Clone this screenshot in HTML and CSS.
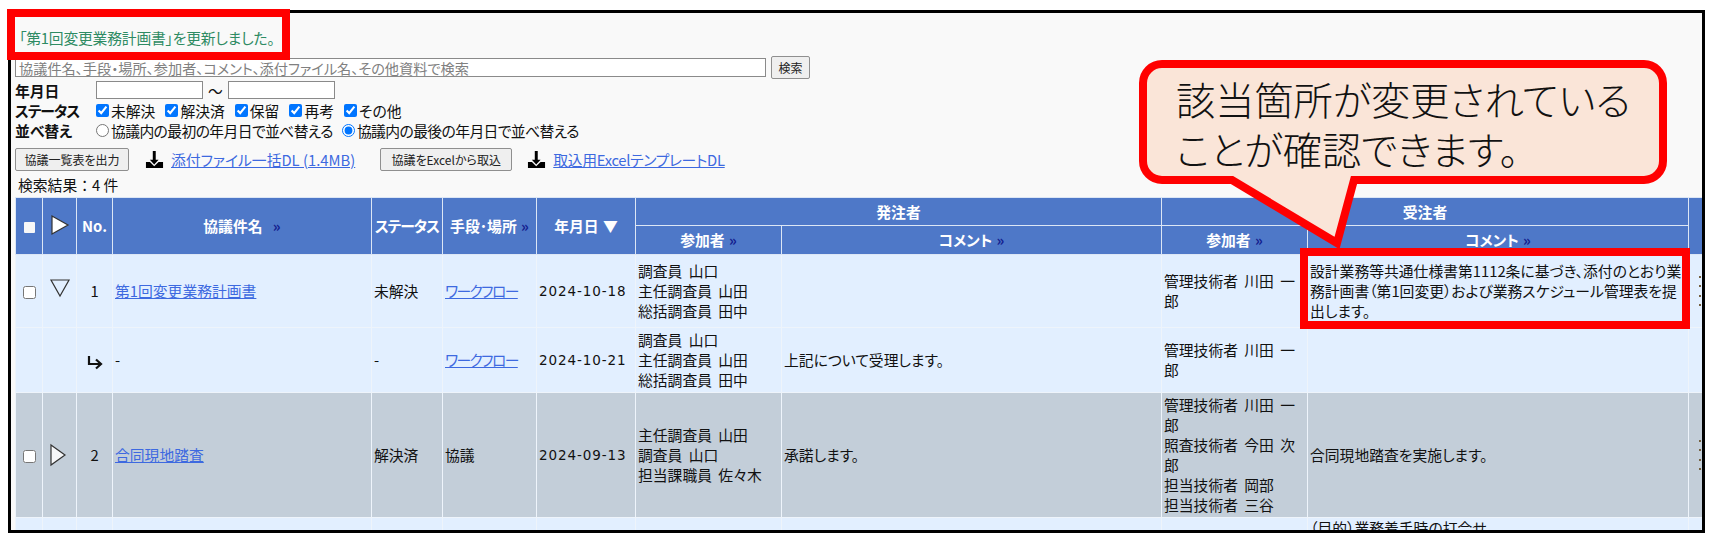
FILE: index.html
```html
<!DOCTYPE html>
<html lang="ja">
<head>
<meta charset="utf-8">
<title>協議一覧</title>
<link rel="stylesheet" href="styles.css">
</head>
<body>
<main class="frame">
  <p class="notice">「第1回変更業務計画書」を更新しました。</p>
  <form class="search-row">
    <input class="search-input" type="text" placeholder="協議件名、手段・場所、参加者、コメント、添付ファイル名、その他資料で検索">
    <button class="btn btn-search" type="button">検索</button>
  </form>
  <div class="filter-row">
    <span class="filter-label">年月日</span>
    <input class="date-input" type="text">
    <span class="tilde">～</span>
    <input class="date-input" type="text">
  </div>
  <div class="filter-row">
    <span class="filter-label label-narrow">ステータス</span>
    <label class="opt"><input type="checkbox" checked>未解決</label>
    <label class="opt"><input type="checkbox" checked>解決済</label>
    <label class="opt"><input type="checkbox" checked>保留</label>
    <label class="opt"><input type="checkbox" checked>再考</label>
    <label class="opt"><input type="checkbox" checked>その他</label>
  </div>
  <div class="filter-row">
    <span class="filter-label">並べ替え</span>
    <label class="opt opt-sort"><input type="radio" name="sort">協議内の最初の年月日で並べ替える</label>
    <label class="opt opt-sort"><input type="radio" name="sort" checked>協議内の最後の年月日で並べ替える</label>
  </div>
  <div class="action-row">
    <button class="btn btn-out" type="button">協議一覧表を出力</button>
    <svg class="dl-icon" viewBox="0 0 20 20"><path d="M8.2 1h3.1v9.2h3l-4.6 5-4.6-5h3.1z"/><path d="M1 12.5h4.2l4.5 4.6 4.6-4.6H19V19H1z"/></svg>
    <a class="link dl-link" href="#">添付ファイル一括DL (1.4MB)</a>
    <button class="btn btn-imp" type="button">協議をExcelから取込</button>
    <svg class="dl-icon" viewBox="0 0 20 20"><path d="M8.2 1h3.1v9.2h3l-4.6 5-4.6-5h3.1z"/><path d="M1 12.5h4.2l4.5 4.6 4.6-4.6H19V19H1z"/></svg>
    <a class="link dl-link dl-link-tight" href="#">取込用ExcelテンプレートDL</a>
  </div>
  <p class="result-count">検索結果：4 件</p>
  <table class="grid">
    <colgroup>
      <col class="c-check"><col class="c-tree"><col class="c-no"><col class="c-name"><col class="c-status"><col class="c-means"><col class="c-date">
      <col class="c-part"><col class="c-comment"><col class="c-part"><col class="c-comment-b"><col class="c-extra">
    </colgroup>
    <thead>
      <tr class="head-top">
        <th rowspan="2"><span class="head-box"></span></th>
        <th rowspan="2"><svg class="tri-head" viewBox="0 0 20 22"><path d="M2 2l16 9-16 9z"/></svg></th>
        <th rowspan="2">No.</th>
        <th rowspan="2">協議件名 <span class="more more-wide">&raquo;</span></th>
        <th rowspan="2" class="th-narrow">ステータス</th>
        <th rowspan="2">手段･場所 <span class="more">&raquo;</span></th>
        <th rowspan="2">年月日 ▼</th>
        <th colspan="2">発注者</th>
        <th colspan="2">受注者</th>
        <th rowspan="2"></th>
      </tr>
      <tr class="head-sub">
        <th>参加者 <span class="more">&raquo;</span></th>
        <th>コメント <span class="more">&raquo;</span></th>
        <th>参加者 <span class="more">&raquo;</span></th>
        <th>コメント <span class="more">&raquo;</span></th>
      </tr>
    </thead>
    <tbody>
      <tr class="row-a">
        <td class="center"><input type="checkbox"></td>
        <td class="center"><svg class="tri" viewBox="0 0 22 20"><path d="M2 2h18l-9 16z"/></svg></td>
        <td class="center">1</td>
        <td><a class="link" href="#">第1回変更業務計画書</a></td>
        <td>未解決</td>
        <td><a class="link kana-narrow" href="#">ワークフロー</a></td>
        <td class="date">2024-10-18</td>
        <td>調査員 山口<br>主任調査員 山田<br>総括調査員 田中</td>
        <td></td>
        <td>管理技術者 川田 一郎</td>
        <td>設計業務等共通仕様書第1112条に基づき、添付のとおり業務計画書（第1回変更）および業務スケジュール管理表を提出します。</td>
        <td class="extra"><span class="clipped"></span></td>
      </tr>
      <tr class="row-b">
        <td></td>
        <td></td>
        <td class="center"><svg class="arrow" viewBox="0 0 18 16"><path d="M3 2v8h11M10 5.5l5 4.5-5 4.5"/></svg></td>
        <td>-</td>
        <td>-</td>
        <td><a class="link kana-narrow" href="#">ワークフロー</a></td>
        <td class="date">2024-10-21</td>
        <td>調査員 山口<br>主任調査員 山田<br>総括調査員 田中</td>
        <td>上記について受理します。</td>
        <td>管理技術者 川田 一郎</td>
        <td></td>
        <td class="extra"></td>
      </tr>
      <tr class="row-c">
        <td class="center"><input type="checkbox"></td>
        <td class="center"><svg class="tri-right" viewBox="0 0 18 24"><path d="M2 2l14 10-14 10z"/></svg></td>
        <td class="center">2</td>
        <td><a class="link" href="#">合同現地踏査</a></td>
        <td>解決済</td>
        <td>協議</td>
        <td class="date">2024-09-13</td>
        <td>主任調査員 山田<br>調査員 山口<br>担当課職員 佐々木</td>
        <td>承諾します。</td>
        <td>管理技術者 川田 一郎<br>照査技術者 今田 次郎<br>担当技術者 岡部<br>担当技術者 三谷</td>
        <td>合同現地踏査を実施します。</td>
        <td class="extra"><span class="clipped"></span></td>
      </tr>
      <tr class="row-d">
        <td></td><td></td><td></td><td></td><td></td><td></td><td></td><td></td><td></td><td></td>
        <td class="top">（目的）業務着手時の打合せ</td>
        <td class="extra"></td>
      </tr>
    </tbody>
  </table>
</main>

<div class="mark mark-notice"></div>
<div class="mark mark-cell"></div>
<aside class="callout">
  <svg class="callout-shape" viewBox="0 0 530 195"><path d="M23 4H505a19 19 0 0 1 19 19V101a19 19 0 0 1-19 19H215L198 183 93 120H23a19 19 0 0 1-19-19V23A19 19 0 0 1 23 4z"/></svg>
  <p class="callout-text">該当箇所が変更されている<br>ことが確認できます。</p>
</aside>
</body>
</html>
```

FILE: styles.css
```css
* { box-sizing: border-box; }
html, body { margin: 0; padding: 0; }
body {
  position: relative;
  height: 547px;
  overflow: hidden;
  background: #fff;
  color: #111;
  font-family: "Noto Sans CJK JP", "Liberation Sans", sans-serif;
  font-size: 14.8px;
  font-feature-settings: "palt";
}
.frame {
  margin: 10px 11px 0 8px;
  height: 523px;
  padding: 15px 0 0 4px;
  border: 3px solid #000;
  background: #f9f9f9;
  overflow: hidden;
}
.notice {
  margin: 0 0 8px 4px;
  height: 20px;
  line-height: 20px;
  color: #2e8b63;
  letter-spacing: -.2px;
}
.search-row { display: flex; align-items: center; gap: 5px; height: 23px; margin-bottom: 1px; }
.search-input {
  width: 751px;
  height: 19px;
  padding: 0 3px;
  border: 1px solid #8a8a8a;
  background: #fff;
  font: inherit;
  font-size: 14.2px;
}
.search-input::placeholder { color: #808080; }
.btn {
  height: 23px;
  padding: 0;
  border: 1px solid #8f8f8f;
  border-radius: 2px;
  background: #efefef;
  color: #222;
  font: inherit;
  font-size: 12px;
}
.btn-search { width: 39px; }
.btn-out { width: 114px; }
.btn-imp { width: 132px; margin-left: 25px; }
.filter-row { display: flex; align-items: center; height: 20px; }
.filter-label { flex: none; width: 81px; font-weight: 700; white-space: nowrap; }
.label-narrow { letter-spacing: -1px; }
.date-input { width: 107px; height: 18px; border: 1px solid #8a8a8a; background: #fff; }
.tilde { width: 25px; text-align: center; }
.opt { display: inline-flex; align-items: center; margin-right: 10px; }
.opt input { width: 13px; height: 13px; margin: 0 2px 0 0; }
.opt-sort { letter-spacing: -.6px; margin-right: 9px; }
.action-row { display: flex; align-items: center; height: 23px; margin-top: 8px; }
.dl-icon { flex: none; width: 19px; height: 19px; margin: 0 7px 0 16px; fill: #000; }
.btn-imp + .dl-icon { margin-left: 15px; }
.link { color: #3d69e0; text-decoration: underline; }
.kana-narrow { letter-spacing: -1.6px; }
.dl-link { white-space: nowrap; }
.dl-link-tight { letter-spacing: -.3px; }
.result-count { margin: 4px 0 2px 3px; height: 20px; line-height: 20px; font-feature-settings: normal; }
.grid {
  width: 1733px;
  table-layout: fixed;
  border-collapse: collapse;
  word-spacing: 3px;
}
.c-check { width: 27px; }
.c-tree { width: 34px; }
.c-no { width: 36px; }
.c-name { width: 259px; }
.c-status { width: 71px; }
.c-means { width: 94px; }
.c-date { width: 99px; }
.c-part { width: 146px; }
.c-comment { width: 380px; }
.c-comment-b { width: 381px; }
.c-extra { width: 60px; }
.grid th, .grid td { border: 1px solid #eef4fb; padding: 0 2px; line-height: 20px; }
.grid th {
  background: #4e78c8;
  border-color: #dce6f5;
  color: #fff;
  font-weight: 700;
  text-align: center;
  white-space: nowrap;
  word-spacing: 1px;
}
.th-narrow { letter-spacing: -1px; }
.head-top { height: 28px; }
.head-sub { height: 29px; }
.more { color: #14208f; }
.more-wide { margin-left: 6px; }
.head-box { display: inline-block; width: 11px; height: 11px; border-radius: 1px; background: #f7f7f7; vertical-align: -1px; }
.tri-head { width: 20px; height: 22px; margin-top: -6px; vertical-align: middle; fill: #fff; stroke: #333; stroke-width: 1.2; }
.row-a { height: 73px; }
.row-b { height: 65px; }
.row-c { height: 125px; }
.row-d { height: 60px; }
.row-a td, .row-b td, .row-d td { background: #e2efff; }
.row-c td { background: #c3ced9; }
.grid .center { text-align: center; padding: 0; }
.grid td input { width: 13px; height: 13px; margin: 0; vertical-align: middle; }
.tri { width: 22px; height: 20px; vertical-align: 3px; fill: none; stroke: #333; stroke-width: 1.2; }
.tri-right { width: 18px; height: 24px; margin-right: 3px; vertical-align: middle; fill: #f6f7f9; stroke: #333; stroke-width: 1.2; }
.arrow { width: 18px; height: 16px; vertical-align: middle; fill: none; stroke: #111; stroke-width: 2.2; }
.date { font-family: "DejaVu Sans", sans-serif; font-size: 13.5px; letter-spacing: .9px; white-space: nowrap; }
.grid .top { vertical-align: top; }
.grid .extra { padding: 0 0 0 10px; }
.clipped {
  display: block;
  width: 2px;
  height: 30px;
  background: repeating-linear-gradient(#75603f 0 2px, transparent 2px 9.5px);
}
.mark { position: absolute; border: 8px solid #f00; }
.mark-notice { left: 7px; top: 9px; width: 283px; height: 51px; }
.mark-cell { left: 1300px; top: 248px; width: 390px; height: 81px; }
.callout { position: absolute; left: 1139px; top: 60px; width: 530px; height: 195px; }
.callout-shape { display: block; width: 530px; height: 195px; fill: #fae5d8; stroke: #f00; stroke-width: 8; overflow: visible; }
.callout-text {
  position: absolute;
  left: 37px;
  top: 13px;
  margin: 0;
  font-size: 39.2px;
  line-height: 50px;
  font-weight: 300;
  white-space: nowrap;
  color: #111;
}
```
